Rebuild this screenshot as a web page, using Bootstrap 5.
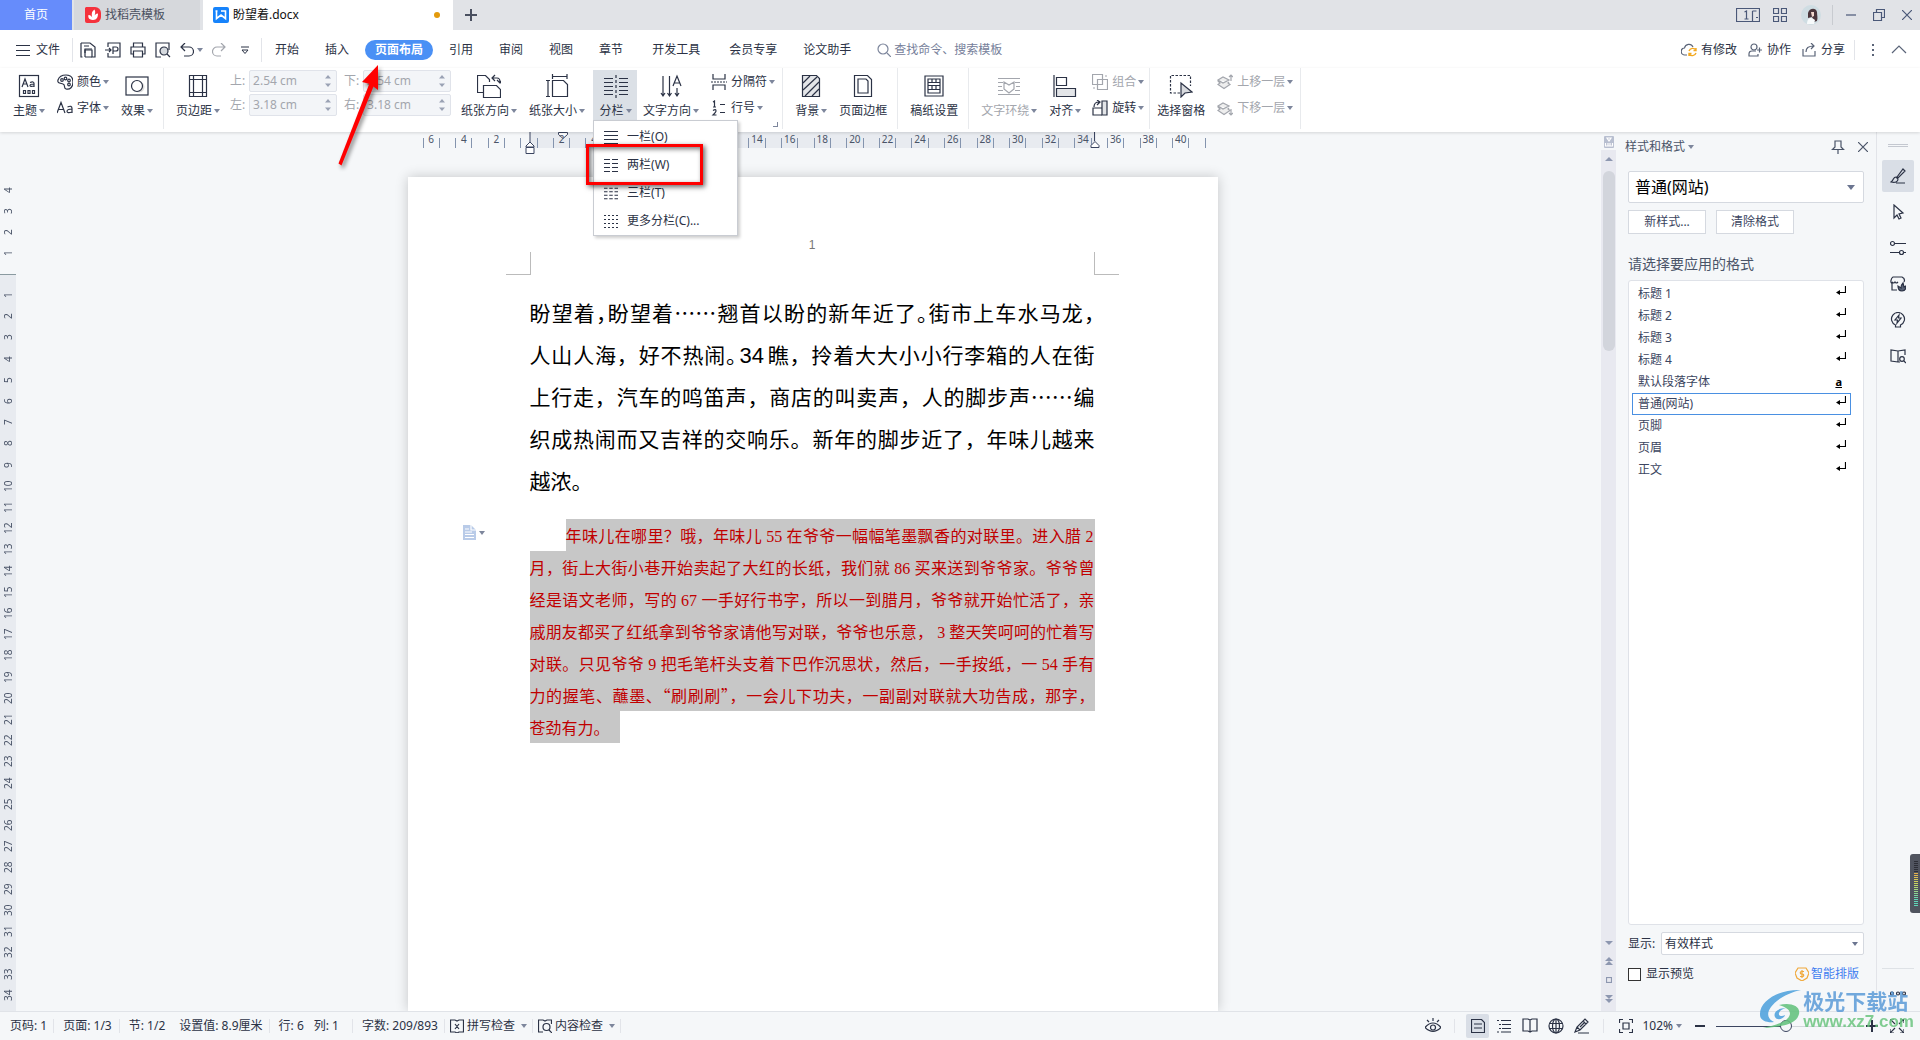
<!DOCTYPE html>
<html lang="zh-CN">
<head>
<meta charset="utf-8">
<meta name="viewport" content="width=device-width, initial-scale=1">
<title>盼望着.docx</title>
<link href="https://cdn.jsdelivr.net/npm/bootstrap@5.3.0/dist/css/bootstrap.min.css" rel="stylesheet">
<style>
:root{--ink:#2b3245;--ink2:#3b4560;--mute:#a3a6ad;--bg:#f5f7f9;--line:#e2e4e9}
html{overflow:hidden}
body{font-family:"Noto Sans","Noto Sans CJK SC",sans-serif;font-size:12px;line-height:18px;color:var(--ink);background:var(--bg);height:100vh;overflow:hidden}
button,input,select{font:inherit;color:inherit}
button{background:none;border:0;padding:0;display:inline-flex;align-items:center;white-space:nowrap}
a{color:inherit;text-decoration:none}
svg{display:block;flex:none;fill:none;stroke:currentColor;stroke-width:1.2}
.s14{width:14px;height:14px}.s16{width:16px;height:16px}.s24{width:24px;height:24px}
.dd::after{content:"";border:3px solid transparent;border-top:4px solid #7d869c;border-bottom:0;margin-left:3px}
.vsep{width:1px;background:var(--line);flex:none}
/* title bar */
.titlebar{height:30px;background:#e1e3e7;flex:none}
.tab-home{width:72px;background:#668cfb;color:#fff;justify-content:center}
.tab-tpl{width:126px;margin-left:2px;background:#d6d8dc;padding-left:11px;gap:4px;color:#4a5060}
.tab-doc{width:250px;margin-left:3px;background:#fff;padding:0 13px 0 10px;gap:4px;color:#111}
.dirty{width:6px;height:6px;border-radius:50%;background:#e39a0c}
.avatar{width:20px;height:20px;stroke:none;margin-left:-3px}
.tb-ctl{gap:17px;padding-right:8px;color:#4a5878}
/* menu row */
.menurow{height:38px;background:#fff;flex:none;padding:1px 13px 0 16px}
.quick{gap:9px;padding:0 8px 0 7px}
.menus{gap:26px;padding-left:13px}
.menus .wide{margin-left:3px}
.pill{background:#4a90f5;color:#fff;border-radius:10px;height:20px;padding:0 10px;font-weight:700;margin:0 -10px}
.search{border:0;background:none;width:140px;padding:0;outline:0}
.search::placeholder{color:#76809a;opacity:1}
/* ribbon */
.ribbon{height:64px;background:#fff;flex:none;padding:0 0 3px 1px;box-shadow:0 1px 3px #0002;position:relative;z-index:5}
.rgroup{border-right:1px solid #e8eaed;padding:0 10px 0 12px;gap:12px;display:flex}
.rbig{flex-direction:column;padding-top:4px;height:50px;margin-top:2px}
.rbig svg{height:24px;width:24px;margin-bottom:2px}
.rbig span{height:18px;display:flex;align-items:center;margin-top:2px}
.rbig .dd::after{margin-left:2px}
.rsm{height:22px;gap:4px}
.rsm.dd::after{margin-left:-2px}
.rcol{display:flex;flex-direction:column;gap:4px;padding-top:3px;align-items:flex-start}
.off{color:var(--mute)}
.spin{width:88px;height:22px;border:1px solid #e0e3ea;border-radius:2px;background:#f3f5f8;display:flex;align-items:center;justify-content:space-between;padding:0 5px 0 3px}
.spin input{width:60px;border:0;background:none;color:var(--mute);padding:0}
.spinrow{display:flex;align-items:center;color:var(--mute)}
.spinrow label{width:19px}
.spincol{display:flex;flex-direction:column;gap:2px;padding-top:2px}
.colbtn{position:relative;margin:0 -6px 0 -4px}
.colbtn .rbig{background:#dbe0e6;padding-left:4px;padding-right:3px;width:44px}
.colmenu{position:absolute;left:0;top:52px;width:145px;background:#fff;border:1px solid #c9ccd2;box-shadow:2px 2px 3px #0003;padding:2px 0 0;z-index:6}
.colmenu button{display:flex;width:100%;height:28px;padding-left:10px;gap:9px}
.hot{position:absolute;left:-8px;top:23px;width:117px;height:41px;border:3px solid #f00;box-shadow:2px 2px 5px #0009,inset 2px 2px 5px #0008;pointer-events:none}
.arrow{position:absolute;left:330px;top:60px;width:60px;height:110px;z-index:9;pointer-events:none;filter:drop-shadow(2px 3px 2px #0007);stroke:none}
.launch{align-self:flex-end;width:5px;height:5px;border:solid #7d869c;border-width:0 1px 1px 0;margin:0 -6px 2px -14px}
/* workspace */
.vruler{width:16px;flex:none;font-size:10px;line-height:12px;color:#4a5468}
.vruler i{font-style:normal;writing-mode:vertical-rl;transform:rotate(180deg);text-align:center;height:14px}
.vneg{height:142px;padding:51px 0 14px}
.vpos{background:#e8ebf0;border-top:1px solid #8a9aa0;padding:13px 0 9px}
.sheetcol{width:810px;margin-left:8px}
.hruler{height:16px;padding:6px 12px 0 15px;background:linear-gradient(#e8ebf0,#e8ebf0) 122px 0/566px 16px no-repeat;position:relative;font-size:10px;line-height:12px;color:#4a5468}
.hruler i{flex:1 1 0;border-left:1px solid #8494ae;font-style:normal;text-align:center;height:10px}
.hruler i b{font-weight:400;position:relative;top:-5px}
.hruler i:last-of-type{border-right:1px solid #8494ae}
.mk{position:absolute;stroke:#3b4560;stroke-width:1;fill:#fff}
.mk0{left:117px;top:0}.mk1{left:150px;top:0}.mk2{left:682px;top:0}
.paper{background:#fff;margin-top:29px;box-shadow:0 0 12px #0003;padding:61px 123px 0 122px;position:relative}
.pno{color:#777;text-align:center;line-height:14px;font-family:"Liberation Sans",sans-serif}
.corners{margin:0 -24px;height:23px}
.corners div{width:25px;border-bottom:1px solid #bbb}
.corners div:first-child{border-right:1px solid #bbb}
.corners div:last-child{border-left:1px solid #bbb}
.p-lg,.p-sel{font-family:"Noto Sans CJK SC",sans-serif;margin:0}
.p-lg{font-size:21px;line-height:42px;color:#000;margin-top:16px}
.p-lg span,.p-sel span{display:block;text-align:justify;text-align-last:justify;white-space:nowrap}
.p-lg span:last-of-type,.p-sel span:last-of-type{text-align-last:left}
.p-lg em,.p-sel em{font-style:normal;line-height:16px}
.p-lg em{font-family:"Liberation Sans",sans-serif;font-size:22px;margin:0 3px 0 2px}
.halt{font-feature-settings:"halt";font-weight:inherit}
.fwid{font-feature-settings:"fwid";font-weight:inherit}
.p-sel{font-size:16px;line-height:32px;color:#c00000;margin-top:18px;position:relative}
.p-sel span{background:#c7c7c7}
.p-sel span:first-of-type{margin-left:36px}
.p-sel span:last-of-type{width:90px}
.p-sel em{font-family:"Liberation Serif",serif;margin:0 4px}
.p-sel em.end{margin-right:1px}
.para-tool{position:absolute;left:-67px;top:6px;line-height:18px}
.vscroll{width:15px;flex:none}
.strack{background:#e8e9f0;padding:7px 1px 8px;margin-top:2px}
.sthumb{width:12px;height:180px;border-radius:6px;background:#d2d5dc;margin-top:10px}
.up,.down{border:4px solid transparent;width:8px}
.up{border-bottom:4px solid #8d97b0;border-top:0}.down{border-top:4px solid #8d97b0;border-bottom:0}
/* style pane */
.pane{width:261px;border-right:1px solid var(--line);padding:0 12px 0 12px;flex:none}
.pane-head{height:30px;margin:0 -4px 0 -3px;color:#4a5468}
.boxsel{border:1px solid #d5d9e0;border-radius:2px;background:#fff;appearance:none;padding:0 10px;background-repeat:no-repeat}
.selwrap{position:relative}
.selwrap::after{content:"";position:absolute;right:9px;top:calc(50% - 2px);border:4px solid transparent;border-top:5px solid #6b7590;border-bottom:0;pointer-events:none}
.selwrap.tiny::after{border-width:4px 3px 0;right:6px}
.big-sel{height:32px;width:100%;font-size:16px;padding:0 6px;color:#000;display:block}
.btn-line{width:78px;height:24px;border:1px solid #d5d9e0;background:#fff;justify-content:center;color:#3b4560}
.slist{border:1px solid #dfe2e8;border-radius:3px;background:#fff;padding:2px 12px 0 3px;margin:6px 0 0;list-style:none}
.slist button{display:flex;width:100%;justify-content:space-between;height:22px;padding:0 5px 0 6px;color:#3b4560}
.slist .cur{border:1px solid #4a90e2}
.slist .cur button{height:20px;padding:0 4px 0 5px}
.slist svg{color:#000;margin-top:-6px}
.schk{width:13px;height:13px;appearance:none;border:1px solid #333;background:#fff;margin:0}
.side{width:43px;flex:none;padding:12px 6px 0 5px}
.side button{width:32px;height:32px;justify-content:center;border-radius:2px;margin-bottom:4px}
.side .on{background:#d9dee6}
.grip{width:20px;height:3px;border:solid #c4c8d0;border-width:1px 0;margin-bottom:13px}
/* status bar */
.status{height:29px;flex:none;border-top:1px solid #e0e3e8}
.status .vsep{height:14px}
.vbtn{width:23px;height:24px;justify-content:center}
.vbtn.on{background:#d9dee6;border-radius:2px}
.zoomer{appearance:none;width:145px;height:14px;background:linear-gradient(90deg,#3b4560 48%,#d3d6dc 48%) center/100% 1px no-repeat;margin:0}
.zoomer::-webkit-slider-thumb{appearance:none;width:12px;height:12px;border-radius:50%;background:#f5f7f9;border:1px solid #3b4560}
.meter{position:absolute;right:0;top:854px;width:10px;height:59px;background:#50545f;border-radius:3px 0 0 3px;padding:7px 2px 6px 4px;z-index:7}
.meter div{height:100%;background:repeating-linear-gradient(#0000 0 1px,#50545f 1px 2px),linear-gradient(#2c2e36 25%,#e8b04a 26%,#c8d860 50%,#5fd6b8 85%)}
.wmark{position:absolute;right:6px;bottom:9px;z-index:8;pointer-events:none;opacity:.85}
.wmark .w1{font:700 21px/26px "Noto Sans CJK SC",sans-serif;color:#5b9bd8}
.wmark .w2{font:700 17px/18px "Liberation Sans",sans-serif;color:#6cc580}
.wmark svg{stroke:none}
</style>
<script src="https://cdn.jsdelivr.net/npm/bootstrap@5.3.0/dist/js/bootstrap.bundle.min.js"></script>
</head>
<body class="d-flex flex-column position-relative">
<svg class="d-none">
<symbol id="ret" viewBox="0 0 10 10"><path d="M9.500 0v6.500H2"/><path d="M0 6.500 4 4v5z" fill="currentColor" stroke="none"/></symbol>
<symbol id="l1" viewBox="0 0 14 14"><path d="M0 1.500h14M0 5.500h14M0 9.500h14M0 13.500h14" /></symbol>
<symbol id="l2" viewBox="0 0 14 14"><path d="M0 1.500h14M0 5.500h14M0 9.500h14M0 13.500h14" stroke-dasharray="6 2"/></symbol>
<symbol id="l3" viewBox="0 0 16 14"><path d="M0 1.500h16M0 5.500h16M0 9.500h16M0 13.500h16" stroke-dasharray="4 2"/></symbol>
<symbol id="l4" viewBox="0 0 14 14"><path d="M0 1.500h14M0 5.500h14M0 9.500h14M0 13.500h14" stroke-dasharray="2 2"/></symbol>
<symbol id="layers" viewBox="0 0 16 16"><path d="M1 6l5-3 6 3-6 3zM1 6v1l2 2-2 1.500 6 4 6-4-2-1.500 1-1" fill="#eee"/></symbol>
</svg>

<header class="titlebar d-flex">
  <button class="tab-home">首页</button>
  <button class="tab-tpl"><svg class="s16" viewBox="0 0 16 16"><path d="M1 0h9a6 6 0 0 1 6 6v4a6 6 0 0 1-6 6H2a2 2 0 0 1-2-2V1z" fill="#f5323c" stroke="none"/><path d="M8 13C3 13 3 9 3.500 8 6 8 7 10 7.500 11 6 7 7 4 9.500 2.500 11 5 10 8 8.500 11 9 8 11 6.500 13 6.500c0 3-1 6.500-5 6.500z" fill="#fff" stroke="none"/></svg>找稻壳模板</button>
  <button class="tab-doc"><svg class="s16" viewBox="0 0 16 16"><rect width="16" height="16" rx="2" fill="#1683fb" stroke="none"/><path d="M2.500 4h2M3.500 4v7.500L8 8l4.500 3.500V4H8" stroke="#fff" stroke-width="1.600"/></svg>盼望着.docx<span class="dirty ms-auto"></span></button>
  <button class="ms-1 px-2" aria-label="新建"><svg width="12" height="12" viewBox="0 0 12 12"><path d="M6 0v12M0 6h12" stroke="#4a5060" stroke-width="2"/></svg></button>
  <div class="tb-ctl ms-auto d-flex align-items-center">
    <svg width="24" height="14" viewBox="0 0 24 14" style="margin-right:-4px"><path d="M.5.500h23v13H.500zM8.500 4l2-1v8M8.500 11h4M16.500 3v10M16.500 3h4M20 9.500h2"/></svg>
    <svg class="s14" viewBox="0 0 14 14"><path d="M.5.500h5v5h-5zM8.500.500h5v5h-5zM.5 8.500h5v5h-5zM8.500 8.500h5v5h-5z"/></svg>
    <svg class="avatar" viewBox="0 0 20 20"><circle cx="10" cy="10" r="10" fill="#cfdde3"/><path d="M7 8c1-5 8-6 9-1 0 3 1 6 0 9l-3 1-2-5-4 1z" fill="#4a363c"/><path d="M10 7l3 0v4l-2 1z" fill="#f2d8cf"/><path d="M6 19c0-6 4-8 8-4l-1 4z" fill="#f7fafb"/></svg>
    <span class="vsep" style="height:20px;background:#c8cbd0;margin-left:-6px"></span>
    <svg width="10" height="10" viewBox="0 0 10 10" style="margin-left:-4px"><path d="M0 5h10"/></svg>
    <svg width="12" height="12" viewBox="0 0 12 12"><path d="M.5 3.500h8v8h-8zM3.500 3V.500h8v8H9"/></svg>
    <svg width="10" height="10" viewBox="0 0 10 10"><path d="M0 0l10 10M10 0L0 10"/></svg>
  </div>
</header>

<nav class="menurow d-flex align-items-center">
  <button class="me-2 pe-1" style="gap:6px"><svg class="s14" viewBox="0 0 14 14"><path d="M0 2.500h14M0 7.500h14M0 12.500h14"/></svg>文件</button>
  <span class="vsep" style="height:24px"></span>
  <div class="quick d-flex align-items-center">
    <svg class="s16" viewBox="0 0 16 16"><path d="M1 1h9l5 4v10h-3V8H5v7M2.500 15H1V1M4 4h5"/><path d="M5 15h7M5 11V7h7"/></svg>
    <svg class="s16" viewBox="0 0 16 16"><path d="M3 5V1h12v14H3v-4M0 8h6M4 6l2 2-2 2M8 12V5h3a2 2 0 0 1 0 4H8"/></svg>
    <svg class="s16" viewBox="0 0 16 16"><path d="M3.500 5V1h9v4M3.500 12H1V5h14v7h-2.500M3.500 9h9v6h-9z"/></svg>
    <svg class="s16" viewBox="0 0 16 16"><path d="M6 15H1V1h13v7M12 12l3 3"/><circle cx="9" cy="9" r="4" fill="#d5d9de"/></svg>
    <button class="dd" aria-label="撤消"><svg class="s14" viewBox="0 0 14 14"><path d="M5 0L1 4l4 4M1 4h8a4 4 0 0 1 0 9H4"/></svg></button>
    <svg class="s14 off" viewBox="0 0 14 14"><path d="M9 0l4 4-4 4M13 4H5a4 4 0 0 0 0 9h4"/></svg>
    <svg class="s16" viewBox="0 0 16 16" style="margin-left:2px"><path d="M4 5h8M5 8h6l-3 3.500z" stroke-width="1"/></svg>
  </div>
  <span class="vsep" style="height:24px"></span>
  <div class="menus d-flex align-items-center text-nowrap">
    <a href="#">开始</a><a href="#">插入</a><a href="#" class="pill d-flex align-items-center">页面布局</a><a href="#">引用</a><a href="#">审阅</a><a href="#">视图</a><a href="#">章节</a><a href="#" class="wide">开发工具</a><a href="#" class="wide">会员专享</a><a href="#">论文助手</a>
    <label class="d-flex align-items-center" style="gap:3px;color:#7d869c"><svg class="s14" viewBox="0 0 14 14"><circle cx="6" cy="6" r="5"/><path d="M10 10l4 4"/></svg><input class="search" placeholder="查找命令、搜索模板" aria-label="搜索"></label>
  </div>
  <div class="d-flex align-items-center ms-auto" style="gap:11px">
    <button style="gap:4px"><svg class="s16" viewBox="0 0 16 16" color="#5a6478"><path d="M6 13H4a3.500 3.500 0 0 1-.5-7A4.500 4.500 0 0 1 12 5"/><path d="M15 8a4 4 0 0 0-7 1M8 12a4 4 0 0 0 7-1M15 6v2.500h-2.500M8 14v-2.500h2.500" stroke="#f3a820" stroke-width="1.400"/></svg>有修改</button>
    <button style="gap:5px"><svg class="s14" viewBox="0 0 14 14" color="#5a6478"><circle cx="6" cy="4" r="3"/><path d="M8 8H4c-2 0-3 1-3 3v2h9v-2M9 7h5M11.500 4.500v5"/></svg>协作</button>
    <button style="gap:5px"><svg class="s14" viewBox="0 0 14 14" color="#5a6478"><path d="M1 6v7h12V8M4 9c0-4 2-6 8-6M9 0l3 3-3 3"/></svg>分享</button>
    <span class="vsep" style="height:20px;margin-left:-2px"></span>
    <svg width="14" height="14" viewBox="0 0 14 14" color="#5a6478"><path d="M6 1h2v2H6zM6 6h2v2H6zM6 11h2v2H6z" fill="currentColor" stroke="none"/></svg>
    <svg width="16" height="14" viewBox="0 0 16 14"><path d="M1 10l7-7 7 7" stroke="#5a6478"/></svg>
  </div>
</nav>

<section class="ribbon d-flex">
  <div class="rgroup">
    <button class="rbig"><svg viewBox="0 0 24 24"><rect x="2.500" y="1.500" width="19" height="21"/><path d="M5 13l3-8 3 8M6 10h4M13 8.500q4-1.500 4 1V13M17 10q-4 0-4 1.500t4 .5M6.500 16.500h2v3h-2zM11 16.500h2v3h-2zM15.500 16.500h2v3h-2z"/></svg><span class="dd">主题</span></button>
    <div class="rcol">
      <button class="rsm dd"><svg class="s16" viewBox="0 0 16 16"><path d="M9 15c-3-1 0-4-3-5S0 9 1 6s4-5 8-5c7 0 7 5 7 7 0 5-3 8-7 7z"/><circle cx="5" cy="6" r="1.300"/><circle cx="8.500" cy="4.500" r="1.300"/><circle cx="12" cy="6.500" r="1.300"/><circle cx="12" cy="10.500" r="1.300"/></svg>颜色</button>
      <button class="rsm dd"><svg class="s16" viewBox="0 0 16 16"><path d="M0 13L4 2.500 8 13M1.500 9.500h5M10.500 7q4.500-2 4.500 1.500V13M15 9q-5 0-5 2.300T15 12"/></svg>字体</button>
    </div>
    <button class="rbig"><svg viewBox="0 0 24 24"><circle cx="14" cy="13" r="5.500" fill="#ddd" stroke="none"/><rect x="1" y="3" width="22" height="18"/><circle cx="12" cy="12" r="5.500" fill="#fff"/></svg><span class="dd">效果</span></button>
  </div>
  <div class="rgroup">
    <button class="rbig"><svg viewBox="0 0 24 24"><path d="M3.500 1.500h17v21h-17zM7.500 1.500v21M16.500 1.500v21M3.500 5.500h17M3.500 18.500h17"/></svg><span class="dd">页边距</span></button>
    <div class="d-flex" style="gap:7px;margin:0 -2px">
      <div class="spincol">
        <div class="spinrow"><label for="mt">上:</label><div class="spin"><input id="mt" value="2.54 cm" disabled><svg width="6" height="12" viewBox="0 0 6 12"><path d="M0 3.500L3 0l3 3.500zM0 8.500L3 12l3-3.500z" fill="#9aa2b4" stroke="none"/></svg></div></div>
        <div class="spinrow"><label for="ml">左:</label><div class="spin"><input id="ml" value="3.18 cm" disabled><svg width="6" height="12" viewBox="0 0 6 12"><path d="M0 3.500L3 0l3 3.500zM0 8.500L3 12l3-3.500z" fill="#9aa2b4" stroke="none"/></svg></div></div>
      </div>
      <div class="spincol">
        <div class="spinrow"><label for="mb">下:</label><div class="spin"><input id="mb" value="2.54 cm" disabled><svg width="6" height="12" viewBox="0 0 6 12"><path d="M0 3.500L3 0l3 3.500zM0 8.500L3 12l3-3.500z" fill="#9aa2b4" stroke="none"/></svg></div></div>
        <div class="spinrow"><label for="mr">右:</label><div class="spin"><input id="mr" value="3.18 cm" disabled><svg width="6" height="12" viewBox="0 0 6 12"><path d="M0 3.500L3 0l3 3.500zM0 8.500L3 12l3-3.500z" fill="#9aa2b4" stroke="none"/></svg></div></div>
      </div>
    </div>
    <button class="rbig"><svg viewBox="0 0 24 24"><path d="M6 18.500H.500v-17h8l4 4V8M6.500 23.500v-12h13l4 4v8zM15 4h5q3 0 3 4M18 1l-3 3 3 3M20 6l3 3 2-3"/></svg><span class="dd">纸张方向</span></button>
    <button class="rbig"><svg viewBox="0 0 24 24"><path d="M7.500 6.500h11l4 4v12h-15zM7 2.500h15M7.500 0v5M22 0v5M3 6v17M1 6.500h4M1 22.500h4"/></svg><span class="dd">纸张大小</span></button>
    <div class="colbtn">
      <button class="rbig"><svg viewBox="0 0 24 24"><path d="M0 4.500h9M0 8.500h9M0 12.500h9M0 16.500h9M0 20.500h9M15 4.500h9M15 8.500h9M15 12.500h9M15 16.500h9M15 20.500h9"/><path d="M12 1v23" stroke-dasharray="3 2"/></svg><span class="dd">分栏</span></button>
      <div class="colmenu">
        <button><svg class="s14"><use href="#l1"/></svg>一栏(O)</button>
        <button><svg class="s14"><use href="#l2"/></svg>两栏(W)</button>
        <button><svg class="s14"><use href="#l3"/></svg>三栏(T)</button>
        <button><svg class="s14"><use href="#l4"/></svg>更多分栏(C)...</button>
        <div class="hot"></div>
      </div>
    </div>
    <button class="rbig"><svg viewBox="0 0 24 24"><path d="M4 2v20M2 19l2 3 2-3M10.500 2v20M8.500 19l2 3 2-3M18 14v8M16 19l2 3 2-3M14 12l4-10 4 10M15 9h6"/></svg><span class="dd">文字方向</span></button>
    <div class="rcol">
      <button class="rsm dd"><svg class="s16" viewBox="0 0 16 16"><path d="M2 0v5h12V0M2 16v-5h12v5"/><path d="M0 8h16" stroke-dasharray="2 1"/></svg>分隔符</button>
      <button class="rsm dd"><svg class="s16" viewBox="0 0 16 16"><path d="M2 2l1.500-1v6M2 7h3M2 10.500q3-2 3 .5 0 1-3 4h3.500M9 4.500h5M9 12.500h5"/></svg>行号</button>
    </div>
    <span class="launch"></span>
  </div>
  <div class="rgroup">
    <button class="rbig"><svg viewBox="0 0 24 24"><path d="M3.500 1.500h14l3 3v18h-17z" fill="#e3e5e8"/><path d="M4 9l7-7M4 16L18 3M6 22L20 8M13 22l7-7"/></svg><span class="dd">背景</span></button>
    <button class="rbig"><svg viewBox="0 0 24 24"><path d="M3.500 1.500h13l4 4v17h-17zM7 5h8l2 2v12H7z"/></svg><span>页面边框</span></button>
  </div>
  <div class="rgroup">
    <button class="rbig"><svg viewBox="0 0 24 24"><path d="M3 2h18v20H3zM6 5h12v14H6z"/><path d="M6 8.500h12M6 11.500h12M6 15.500h12M10 5v3M14 5v3M10 12v3M14 12v3"/></svg><span>稿纸设置</span></button>
  </div>
  <div class="rgroup">
    <button class="rbig off"><svg viewBox="0 0 24 24"><path d="M1 4.500h22M1 8.500h5M18 8.500h5M1 12.500h4M19 12.500h4M1 16.500h5M18 16.500h5M1 20.500h22M7 8l5 3 5-3v7l-5 4-5-4z"/></svg><span class="dd">文字环绕</span></button>
    <button class="rbig"><svg viewBox="0 0 24 24"><path d="M1 1v22M3.500 3.500h10v8h-10z"/><path d="M3.500 14.500h19v8h-19z" fill="#e3e5e8"/></svg><span class="dd">对齐</span></button>
    <div class="rcol" style="margin:0 -5px 0 -1px">
      <button class="rsm dd off"><svg class="s16" viewBox="0 0 16 16"><path d="M.5.500h10v10H.500zM5.500 5.500h10v10h-10zM13 2h2M1 14h2"/></svg>组合</button>
      <button class="rsm dd"><svg class="s16" viewBox="0 0 16 16"><path d="M10 1h5v14h-5z" fill="#e3e5e8"/><path d="M10 8H1v7h9M2 7q0-5 5-5M5 0l3 2-3 3"/></svg>旋转</button>
    </div>
  </div>
  <div class="rgroup" style="padding-left:7px;padding-right:7px">
    <button class="rbig"><svg viewBox="0 0 24 24"><path d="M11 19H1.500V1.500h20V12" stroke-dasharray="2.500 1.500"/><path d="M12 9v14l4-4 7-1z" fill="#d8dade"/></svg><span>选择窗格</span></button>
    <div class="rcol">
      <button class="rsm dd off"><svg class="s16" viewBox="0 0 16 16"><use href="#layers"/><path d="M14 7V1M12 3l2-2 2 2"/></svg>上移一层</button>
      <button class="rsm dd off"><svg class="s16" viewBox="0 0 16 16"><use href="#layers"/><path d="M14 9v6M12 13l2 2 2-2"/></svg>下移一层</button>
    </div>
  </div>
</section>

<main class="d-flex flex-grow-1" style="min-height:0">
  <aside class="vruler d-flex flex-column">
    <div class="vneg d-flex flex-column align-items-center justify-content-between" id="vneg"></div>
    <div class="vpos d-flex flex-column align-items-center justify-content-between flex-grow-1" id="vpos"></div>
  </aside>
  <section class="d-flex flex-grow-1 justify-content-center overflow-hidden">
    <div class="sheetcol d-flex flex-column">
      <div class="hruler d-flex" id="hruler">
        <svg class="mk mk0" width="10" height="22" viewBox="0 0 10 22"><path d="M5 0v11M5 10l4 4v1H1v-1zM1 15.500h8v6H1z"/></svg>
        <svg class="mk mk1" width="10" height="8" viewBox="0 0 10 8"><path d="M.5.500h9v2L5 6.500.500 2.500z"/></svg>
        <svg class="mk mk2" width="10" height="16" viewBox="0 0 10 16"><path d="M4.500 0v9M5 9.500l4 4v2H1v-2z"/></svg>
      </div>
      <article class="paper flex-grow-1">
        <div class="pno">1</div>
        <div class="corners d-flex justify-content-between"><div></div><div></div></div>
        <p class="p-lg"><span class="halt">盼望着，盼望着……翘首以盼的新年近了。街市上车水马龙，</span><span>人山人海，好不热闹<b class="halt">。</b><em>34</em>瞧，拎着大大小小行李箱的人在街</span><span>上行走，汽车的鸣笛声，商店的叫卖声，人的脚步声……编</span><span>织成热闹而又吉祥的交响乐。新年的脚步近了，年味儿越来</span><span>越浓。</span></p>
        <p class="p-sel"><span>年味儿在哪里？哦，年味儿<em>55</em>在爷爷一幅幅笔墨飘香的对联里。进入腊<em class="end">2</em></span><span>月，街上大街小巷开始卖起了大红的长纸，我们就<em>86</em>买来送到爷爷家。爷爷曾</span><span>经是语文老师，写的<em>67</em>一手好行书字，所以一到腊月，爷爷就开始忙活了，亲</span><span>戚朋友都买了红纸拿到爷爷家请他写对联，爷爷也乐意，<em>3</em>整天笑呵呵的忙着写</span><span>对联。只见爷爷<em>9</em>把毛笔杆头支着下巴作沉思状，然后，一手按纸，一<em>54</em>手有</span><span>力的握笔、蘸墨、<b class="fwid">“</b>刷刷刷<b class="fwid">”</b>，一会儿下功夫，一副副对联就大功告成，那字，</span><span>苍劲有力。</span>
          <button class="para-tool dd" aria-label="段落布局"><svg width="13" height="15" viewBox="0 0 13 15"><path d="M0 0h8l5 5v10H0z" fill="#b9cbe8" stroke="none"/><path d="M2 4h4M2 7h7M2 9.500h9M2 12.500h9M8 0v5h5" stroke="#fff"/></svg></button></p>
      </article>
    </div>
  </section>
  <div class="vscroll d-flex flex-column align-items-center">
    <svg width="10" height="12" viewBox="0 0 10 12" class="mt-1"><rect width="10" height="12" rx="1" fill="#b8bfd0" stroke="none"/><path d="M3 2h4L5 5zM1.500 7v3h7V7M4 7v3M6 7v3" stroke="#fff" /></svg>
    <div class="strack flex-grow-1 w-100 d-flex flex-column align-items-center">
      <div class="up"></div><div class="sthumb"></div>
      <div class="down mt-auto"></div>
      <div class="up" style="margin-top:12px"></div><div class="up"></div>
      <svg width="6" height="6" viewBox="0 0 6 6" style="margin:12px 0;color:#8d97b0"><rect x=".5" y=".5" width="5" height="5"/></svg>
      <div class="down"></div><div class="down"></div>
    </div>
  </div>
  <aside class="pane d-flex flex-column">
    <div class="pane-head d-flex align-items-center"><span class="dd d-flex align-items-center me-auto">样式和格式</span>
      <svg class="s14" viewBox="0 0 14 14" style="margin-right:13px"><path d="M4 1h6v6l2.500 2.500h-11L4 7zM7 10v4"/></svg><svg width="10" height="10" viewBox="0 0 10 10"><path d="M0 0l10 10M10 0L0 10"/></svg></div>
    <div class="selwrap" style="margin-top:9px"><select class="boxsel big-sel" aria-label="当前样式"><option>普通(网站)</option></select></div>
    <div class="d-flex" style="gap:10px;margin-top:7px"><button class="btn-line">新样式...</button><button class="btn-line">清除格式</button></div>
    <div style="font-size:14px;line-height:20px;margin-top:20px;color:#4a5468">请选择要应用的格式</div>
    <ul class="slist flex-grow-1">
      <li><button>标题 1<svg width="10" height="10"><use href="#ret"/></svg></button></li>
      <li><button>标题 2<svg width="10" height="10"><use href="#ret"/></svg></button></li>
      <li><button>标题 3<svg width="10" height="10"><use href="#ret"/></svg></button></li>
      <li><button>标题 4<svg width="10" height="10"><use href="#ret"/></svg></button></li>
      <li><button>默认段落字体<u class="text-black pe-1 fw-bold" style="font-size:11px">a</u></button></li>
      <li class="cur"><button>普通(网站)<svg width="10" height="10"><use href="#ret"/></svg></button></li>
      <li><button>页脚<svg width="10" height="10"><use href="#ret"/></svg></button></li>
      <li><button>页眉<svg width="10" height="10"><use href="#ret"/></svg></button></li>
      <li><button>正文<svg width="10" height="10"><use href="#ret"/></svg></button></li>
    </ul>
    <div class="d-flex align-items-center" style="margin-top:7px"><label for="show" style="width:33px">显示:</label><div class="selwrap tiny flex-grow-1"><select id="show" class="boxsel w-100 d-block" style="height:23px;padding:0 3px"><option>有效样式</option></select></div></div>
    <div class="d-flex align-items-center justify-content-between" style="margin:10px 5px 28px 0"><label class="d-flex align-items-center" style="gap:5px"><input type="checkbox" class="schk">显示预览</label>
      <a href="#" class="d-flex align-items-center" style="gap:2px;color:#3f7df0"><svg class="s14" viewBox="0 0 14 14" style="color:#f0a83a"><path d="M3 1h8l3 5-2 5-5 3-5-3L0 6z"/><path d="M9 4.500H6.500a1 1 0 0 0 0 2.500h1a1 1 0 0 1 0 2.500H5M7 3v8"/></svg>智能排版</a></div>
  </aside>
  <aside class="side d-flex flex-column align-items-center">
    <div class="grip"></div>
    <button class="on" aria-label="样式"><svg class="s16" viewBox="0 0 16 16"><path d="M6 15h9M7 9l6-8 2 2-7 7zM6 9c-3 0-2 3-5 5 4 1 7 0 7-3z"/></svg></button>
    <button aria-label="选择"><svg class="s16" viewBox="0 0 16 16"><path d="M4 1v13l3-3 2 4 2-1-2-4 4-1z"/></svg></button>
    <button aria-label="属性"><svg class="s16" viewBox="0 0 16 16"><circle cx="2.500" cy="3.500" r="2"/><path d="M5 3.500h11M0 12.500h9M13 12.500h3"/><circle cx="11.500" cy="12.500" r="2"/></svg></button>
    <button aria-label="素材"><svg class="s16" viewBox="0 0 16 16"><path d="M7 14H2V7M2 7C0 7 1 2 3 1h9c2 1 3 3 2 5M2 6q2 2 3 0 1 2 3 0"/><path d="M12 15c-4 0-4-3-4-5l3 2c0-3 1-4 2-5l1 4 2-1c0 3-1 5-4 5z" fill="#5a6478"/></svg></button>
    <button aria-label="灵感"><svg class="s16" viewBox="0 0 16 16"><path d="M5.500 13A6.500 6.500 0 1 1 10.500 13v2h-5zM9 3L5 8h2.500L7 11l4-5H8.500z"/></svg></button>
    <button aria-label="查找"><svg class="s16" viewBox="0 0 16 16"><path d="M8 14L1 13V2l7 1 7-1v5M8 3v11h2M1 2v11"/><circle cx="12" cy="11" r="2.300"/><path d="M14 13l2 2"/></svg></button>
    <div class="w-100 border-top mt-auto" style="margin-bottom:22px"></div>
    <svg width="16" height="5" viewBox="0 0 16 5" style="margin-bottom:15px"><circle cx="2" cy="2.500" r="1.500"/><circle cx="8" cy="2.500" r="1.500"/><circle cx="14" cy="2.500" r="1.500"/></svg>
  </aside>
</main>

<footer class="status d-flex align-items-center text-nowrap">
  <div class="d-flex align-items-center" style="gap:9px;padding-left:10px;margin-right:6px">
    <span>页码: 1</span><span class="vsep" style="margin-left:-3px"></span>
    <span>页面: 1/3</span><span class="vsep" style="margin-left:-2px"></span>
    <span>节: 1/2</span><span style="margin-left:5px">设置值: 8.9厘米</span><span class="vsep" style="margin-left:-3px"></span>
    <span>行: 6</span><span style="margin-left:1px">列: 1</span><span class="vsep ms-1"></span>
    <span>字数: 209/893</span>
  </div>
  <div class="d-flex align-items-center" style="gap:5px">
    <span class="vsep"></span>
    <button class="dd" style="gap:3px"><svg class="s14" viewBox="0 0 14 14"><path d="M5 1H.500v12H5l2 1 2-1h4.500V1H9L7 2 5 1M5 5l4 5M9 5l-4 5"/></svg>拼写检查</button>
    <span class="vsep"></span>
    <button class="dd" style="gap:3px"><svg class="s14" viewBox="0 0 14 14"><path d="M5 13H.500V1H5l2 1 2-1h4.500v4M11 11l3 3"/><circle cx="8.500" cy="8" r="3.500"/></svg>内容检查</button>
    <span class="vsep"></span>
  </div>
  <div class="d-flex align-items-center ms-auto" style="padding-right:16px">
    <svg class="s16" viewBox="0 0 16 16"><path d="M0 9.500q8-9 16 0-8 8-16 0zM8 0v3M2 2l2 2M14 2l-2 2"/><circle cx="8" cy="9.500" r="2.500"/></svg>
    <span class="vsep" style="margin:0 11px 0 13px"></span>
    <div class="d-flex" style="gap:3px">
      <button class="vbtn on" aria-label="页面视图"><svg class="s14" viewBox="0 0 14 14"><path d="M.5.500h10l3 3v10H.500zM3 5h8M3 9h8"/></svg></button>
      <button class="vbtn" aria-label="大纲"><svg class="s14" viewBox="0 0 14 14"><path d="M0 1.500h2M4 1.500h10M2 5.500h2M5 5.500h9M2 9.500h2M5 9.500h9M0 13h2M4 13h10"/></svg></button>
      <button class="vbtn" aria-label="阅读"><svg class="s16" viewBox="0 0 16 16"><path d="M8 14L6 13H1V1h5l2 1 2-1h5v12h-5zM8 2v12"/></svg></button>
      <button class="vbtn" aria-label="网页"><svg class="s16" viewBox="0 0 16 16"><circle cx="8" cy="8" r="7"/><ellipse cx="8" cy="8" rx="3.500" ry="7"/><path d="M1.500 5.500h13M1.500 10.500h13M8 1v14"/></svg></button>
      <button class="vbtn" aria-label="写作"><svg class="s16" viewBox="0 0 16 16"><path d="M4 15h11M1 14l2-5 8-8 3 3-8 8zM9 3l3 3M3 9l3 3M6 9l5-5"/></svg></button>
    </div>
    <span class="vsep" style="margin:0 15px 0 10px"></span>
    <svg class="s14" viewBox="0 0 14 14"><path d="M.5 4V.500H4M10 .5h3.500V4M13.500 10v3.500H10M4 13.500H.500V10M4 4h6v6H4z"/></svg>
    <button class="dd" style="margin-left:9px">102%</button>
    <svg width="10" height="10" viewBox="0 0 10 10" style="margin:0 11px 0 13px"><path d="M0 5h10" stroke-width="2"/></svg>
    <input type="range" class="zoomer" value="48" aria-label="缩放">
    <svg width="12" height="12" viewBox="0 0 12 12" style="margin:0 12px 0 5px"><path d="M0 6h12M6 0v12" stroke-width="2"/></svg>
    <svg class="s14" viewBox="0 0 14 14"><path d="M0 4V0h4M0 0l5 5M10 0h4v4M14 0L9 5M14 10v4h-4M14 14L9 9M4 14H0v-4M0 14l5-5"/></svg>
  </div>
</footer>

<svg class="arrow" viewBox="0 0 60 110"><path d="M8.500 103.500L40 22l4.500 2L11.500 105.500z" fill="#f00"/><path d="M48 5L32 22l8 2 8 6z" fill="#f00"/></svg>
<div class="meter"><div></div></div>
<div class="wmark d-flex align-items-center" style="gap:2px">
  <svg width="42" height="40" viewBox="0 0 42 40"><path d="M42 1C20 0 0 12 1 26c0 6 8 8 14 7-6-3-8-8-3-15S28 4 42 1z" fill="#4a9fdc"/><path d="M20 16c10-3 22 0 20 9-2 9-14 13-36 14 14-3 26-7 27-14 0-5-5-7-11-9z" fill="#5fc07a"/><path d="M27 19c-9 0-13 5-11 9s9 2 10-2c-3 2-7 1-6-2s4-4 7-5z" fill="#4a9fdc"/></svg>
  <div><div class="w1">极光下载站</div><div class="w2">www.xz7.com</div></div>
</div>
<script>
// ruler marks: two units per number across, one per number down
const h = document.getElementById('hruler');
for (let i = 0; i < 48; i++) {
  const n = Math.abs(i - 6), cell = document.createElement('i');
  if (i % 2 === 0 && n) cell.innerHTML = '<b>' + n + '</b>';
  h.append(cell);
}
const fill = (id, list) => document.getElementById(id).innerHTML = list.map(n => '<i>' + n + '</i>').join('');
fill('vneg', [4, 3, 2, 1]);
fill('vpos', Array.from({length: 34}, (_, i) => i + 1));
</script>
</body>
</html>
